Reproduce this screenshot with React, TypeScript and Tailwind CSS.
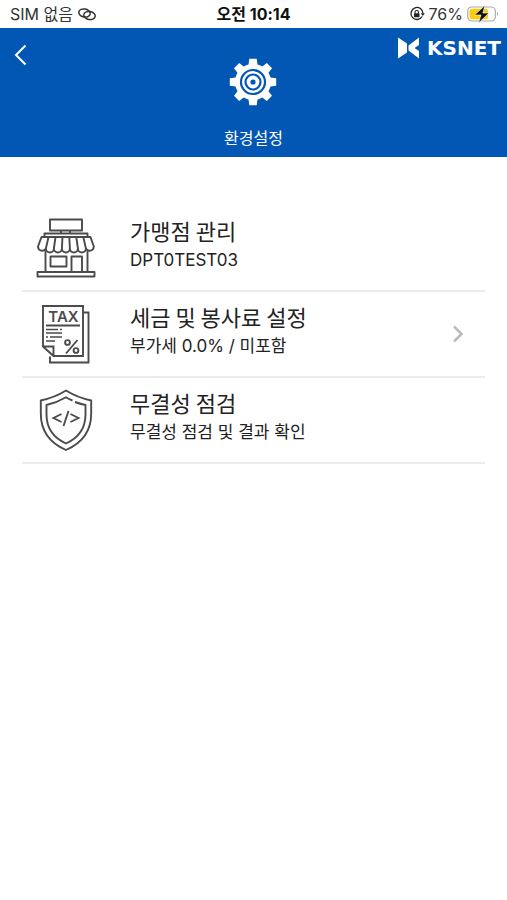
import type { ReactNode } from 'react'

interface SettingItem {
    id: string
    title: string
    description: string
    icon: ReactNode
    hasArrow?: boolean
}

function StoreIcon() {
    return (
        <svg viewBox="0 0 60 60" className="h-[60px] w-[60px]" fill="none" stroke="#4b4b4b" strokeWidth="1.900" strokeLinejoin="round" aria-hidden="true">
            <rect x="14" y="1.5" width="32" height="11" />
            <path d="M25 12.5v3M34 12.5v3" />
            <path d="M8.500 19v-3.500h43V19" />
            <path d="M5.500 19h49l3.300 9.500a4.200 4.200 0 0 1-7.900 2 4 4 0 0 1-8 0 4 4 0 0 1-8 0 4 4 0 0 1-8 0 4 4 0 0 1-8 0 4 4 0 0 1-8 0A4.200 4.200 0 0 1 2 28.500z" />
            <path d="M12.500 19l-2.600 11.500M19.500 19l-1.600 11.500M26.500 19l-.6 11.500M33.300 19l.6 11.500M40.300 19l1.600 11.500M47.300 19l2.600 11.500" />
            <path d="M9.500 33v21M51.500 33v21" />
            <rect x="14.500" y="38.500" width="16" height="10" />
            <path d="M35.500 54V38.500h10.500V54" />
            <rect x="1.500" y="54" width="57" height="4.500" />
        </svg>
    )
}

function TaxIcon() {
    return (
        <svg viewBox="0 0 60 60" className="h-[60px] w-[60px]" fill="none" stroke="#4b4b4b" strokeWidth="1.900" aria-hidden="true">
            <path d="M47 8.500h5.500v50H14v-6" />
            <path d="M7 2h40v50H17.500L7 42.500zM7 42.500h10.500V52" />
            <path d="M10 21.500h34" />
            <path d="M10 25.500h12M24 25.500h2M10 29h16M10 33h2M14 33h12M10 37h9" strokeWidth="1.700" />
            <text x="27.500" y="18" textAnchor="middle" fontSize="15" fontWeight="600" fill="#4b4b4b" stroke="none">TAX</text>
            <path d="M41.500 36L30 49.500" />
            <circle cx="31.500" cy="38.500" r="2.400" />
            <circle cx="40" cy="46.500" r="2.400" />
        </svg>
    )
}

function ShieldIcon() {
    return (
        <svg viewBox="0 0 60 62" className="h-[62px] w-[60px]" fill="none" stroke="#4b4b4b" strokeWidth="1.900" strokeLinejoin="round" aria-hidden="true">
            <path d="M30 1.500C22 6.500 14 9.500 4.800 11.500v13C4.800 43 15 54.500 30 61c15-6.500 25.200-18 25.200-36.500v-13C46 9.500 38 6.500 30 1.500z" />
            <path d="M36.500 11.500C34 10.500 32 9.500 30 8.200 23.500 12 17.500 14.500 10.500 16v9.500c0 14 7.500 23.500 19.500 29 12-5.500 19.500-15 19.500-29V16c-4-.8-7.500-1.800-10.500-3" />
            <path d="M25.500 25l-8 4 8 4M34.500 25l8 4-8 4M32.500 22l-5 15" strokeLinejoin="miter" />
        </svg>
    )
}

function GearIcon() {
    const teeth = [0, 45, 90, 135, 180, 225, 270, 315]
    return (
        <svg viewBox="0 0 48 48" className="h-12 w-12" aria-hidden="true">
            <g fill="#fff">
                <circle cx="24" cy="24" r="18" />
                {teeth.map((angle) => (
                    <path key={angle} d="M20.300 .8h7.400l1 8h-9.400z" transform={`rotate(${angle} 24 24)`} />
                ))}
            </g>
            <g fill="none" stroke="#0257b4" strokeWidth="2.200">
                <circle cx="24" cy="24" r="12" />
                <circle cx="24" cy="24" r="7.500" />
            </g>
            <circle cx="24" cy="24" r="2.600" fill="#0257b4" />
        </svg>
    )
}

const items: SettingItem[] = [
    { id: 'store', title: '가맹점 관리', description: 'DPT0TEST03', icon: <StoreIcon /> },
    { id: 'tax', title: '세금 및 봉사료 설정', description: '부가세 0.0% / 미포함', icon: <TaxIcon />, hasArrow: true },
    { id: 'integrity', title: '무결성 점검', description: '무결성 점검 및 결과 확인', icon: <ShieldIcon /> },
]

function StatusBar() {
    return (
        <div className="grid h-7 grid-cols-[1fr_auto_1fr] items-center px-2 text-base leading-7 text-[#333]">
            <div className="flex items-center gap-1 pl-0.5">
                <span>SIM 없음</span>
                <svg viewBox="0 0 20 14" className="h-3.5 w-5" fill="none" stroke="#333" strokeWidth="1.500" aria-hidden="true">
                    <ellipse cx="7.500" cy="6" rx="5.800" ry="4" transform="rotate(12 7.500 6)" />
                    <ellipse cx="12.500" cy="8.500" rx="5.800" ry="4" transform="rotate(12 12.500 8.500)" />
                </svg>
            </div>
            <span className="font-bold text-[#111]">오전 10:14</span>
            <div className="flex items-center justify-end gap-1">
                <svg viewBox="0 0 16 16" className="h-4 w-4" aria-hidden="true">
                    <path d="M13.200 10.500A6 6 0 1 1 14 7.500" fill="none" stroke="#222" strokeWidth="1.300" />
                    <path d="M11.800 7.200h4L13.800 10z" fill="#222" />
                    <rect x="5" y="7.200" width="5.500" height="4" rx=".6" fill="#222" />
                    <path d="M6 7.500V6.200a1.700 1.700 0 0 1 3.500 0v1.300" fill="none" stroke="#222" strokeWidth="1.100" />
                </svg>
                <span>76%</span>
                <svg viewBox="0 0 32 18" className="h-[18px] w-8" aria-hidden="true">
                    <rect x=".8" y="2" width="27.500" height="14" rx="4" fill="#fff" stroke="#aaa" strokeWidth="1.200" />
                    <rect x="2.500" y="3.700" width="18.500" height="10.600" rx="2.500" fill="#fccc0a" />
                    <path d="M30 7v4c1.500-.5 1.500-3.500 0-4z" fill="#aaa" />
                    <path d="M18 .5L7.500 10H14l-2.500 8L22 8h-6.200z" fill="#111" stroke="#fff" strokeWidth=".6" />
                </svg>
            </div>
        </div>
    )
}

function Brand() {
    return (
        <div className="flex items-center gap-1.5 text-white">
            <svg viewBox="0 0 24 24" className="h-6 w-6" fill="#fff" aria-hidden="true">
                <path d="M1 1.500l9 6v9L1 22.500z" />
                <path d="M22 1.500v7.500L17.500 12l4.500 3v7.500L11.500 14.500v-5z" />
            </svg>
            <span className="font-['DejaVu_Sans',sans-serif] text-xl leading-6 font-bold">KSNET</span>
        </div>
    )
}

export default function App() {
    return (
        <div className="min-h-screen bg-white font-['Inter','Noto_Sans_CJK_KR',sans-serif]">
            <StatusBar />
            <header className="grid grid-cols-[1fr_auto_1fr] items-start bg-[#0257b4] px-1.5 pt-2 pb-[7px]">
                <button type="button" aria-label="뒤로" className="mt-2 ml-1.5 w-4">
                    <svg viewBox="0 0 16 22" className="h-[22px] w-4" fill="none" stroke="#fff" strokeWidth="2" aria-hidden="true">
                        <path d="M13.500 1.500L4 11l9.500 9.500" />
                    </svg>
                </button>
                <div className="flex flex-col items-center gap-5 pt-[22px]">
                    <GearIcon />
                    <h1 className="text-base leading-6 text-white">환경설정</h1>
                </div>
                <div className="flex justify-end">
                    <Brand />
                </div>
            </header>
            <main className="px-[22px] pt-[49px]">
                <ul>
                    {items.map((item) => (
                        <li key={item.id} className="border-b-2 border-[#ebebeb]">
                            <button type="button" className="flex h-[84px] w-full items-center pr-5 pl-3.5 text-left">
                                {item.icon}
                                <span className="ml-[34px] flex flex-1 flex-col pb-2 text-[#222]">
                                    <span className="font-['Noto_Sans_CJK_KR',sans-serif] text-[22px] leading-8">{item.title}</span>
                                    <span className="text-[17px] leading-7">{item.description}</span>
                                </span>
                                {item.hasArrow && (
                                    <svg viewBox="0 0 12 20" className="h-5 w-3" fill="none" stroke="#bbb" strokeWidth="2.500" aria-hidden="true">
                                        <path d="M1 2.500l7.500 7.500L1 17.500" />
                                    </svg>
                                )}
                            </button>
                        </li>
                    ))}
                </ul>
            </main>
        </div>
    )
}
